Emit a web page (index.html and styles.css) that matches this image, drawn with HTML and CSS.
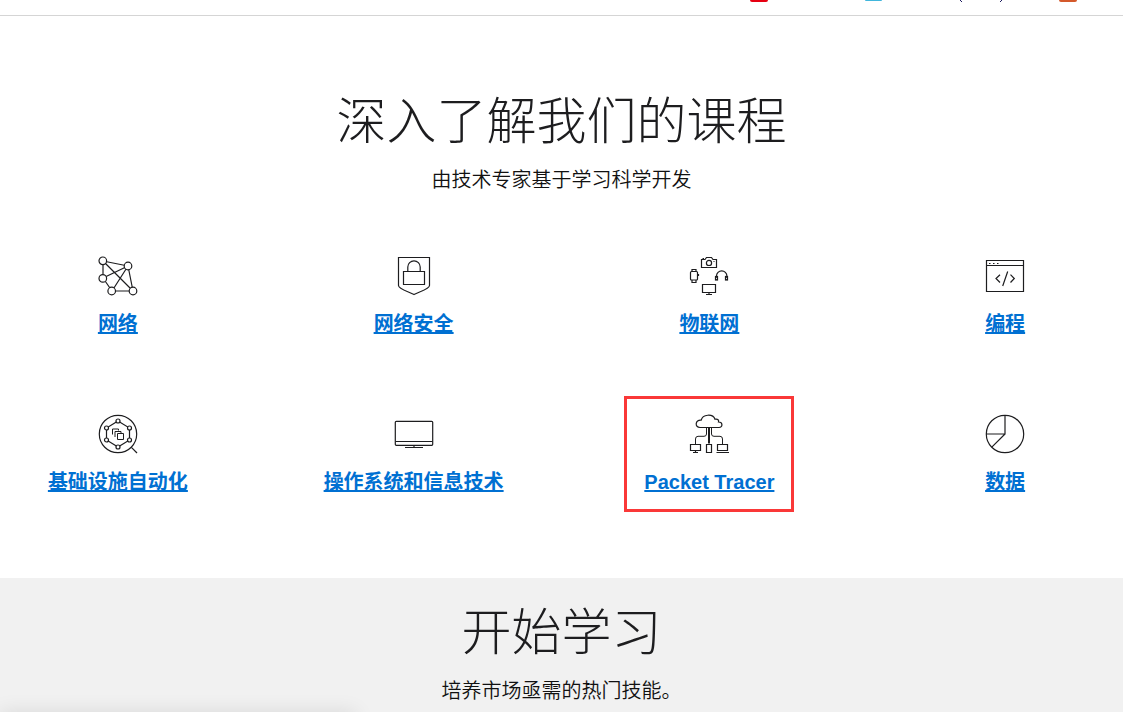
FILE: index.html
```html
<!DOCTYPE html>
<html lang="zh-CN">

<head>
  <meta charset="UTF-8" />
  <meta name="viewport" content="width=device-width, initial-scale=1" />
  <title>深入了解我们的课程</title>
  <link rel="stylesheet" href="styles.css">
</head>

<body>
  <!-- Bottom edge of the bookmarks bar -->
  <header class="topbar">
    <span class="mark mark-red"></span>
    <span class="mark mark-blue"></span>
    <svg class="mark-brackets" viewBox="0 0 44 3" aria-hidden="true">
      <path d="M1 0l2 2M43 0l-2 2" fill="none" stroke="#1a1a5e" />
    </svg>
    <span class="mark mark-orange"></span>
  </header>

  <main>
    <section class="courses">
      <h2 class="title">深入了解我们的课程</h2>
      <p class="subtitle">由技术专家基于学习科学开发</p>

      <ul class="course-grid">
        <li>
          <a class="course" href="#">
            <svg class="icon" viewBox="0 0 40 40" aria-hidden="true">
              <path d="M5 5L30 10M5 5V22M5 5L35 35M30 10L5 22M30 10L14 35M30 10L35 35M5 22L14 35H35" />
              <g class="fill-white">
                <circle cx="4.8" cy="4.8" r="3.8" />
                <circle cx="30" cy="10" r="3.8" />
                <circle cx="4.8" cy="22.4" r="3.8" />
                <circle cx="13.7" cy="35" r="3.8" />
                <circle cx="35" cy="35" r="3.8" />
              </g>
            </svg>
            <span>网络</span>
          </a>
        </li>
        <li>
          <a class="course" href="#">
            <svg class="icon" viewBox="0 0 40 40" aria-hidden="true">
              <path d="M4.5 1.5H35.5V29.5C35.5 33 26 35.5 20 38.5C14 35.5 4.5 33 4.5 29.5Z" />
              <path d="M9.5 15.5H30.5V28.5H9.5ZM13.8 15.5V11a6.2 6.2 0 0 1 12.4 0V15.5" />
            </svg>
            <span>网络安全</span>
          </a>
        </li>
        <li>
          <a class="course" href="#">
            <svg class="icon" viewBox="0 0 40 40" aria-hidden="true">
              <path d="M12.5 3.5H16L17.5 1.5H22.5L24 3.5H27.5V11.5H12.5Z" />
              <circle cx="20" cy="6.9" r="2.6" />
              <path d="M24.5 5.5H25.5M13.5 2.5H15" />
              <rect x="1.5" y="15.5" width="7" height="8.5" rx="1" />
              <path d="M3 15.5V13.5H7V15.5M3 24V26.5H7V24M9.5 18V20" />
              <path d="M27.5 20.5V20a5.2 5.2 0 0 1 10.4 0V20.5" />
              <rect x="26.5" y="20.5" width="2" height="3.5" />
              <rect x="36.5" y="20.5" width="2" height="3.5" />
              <path d="M13.5 28.5H26.5V36.5H13.5ZM20 36.5V38.5M17 38.5H23" />
            </svg>
            <span>物联网</span>
          </a>
        </li>
        <li>
          <a class="course" href="#">
            <svg class="icon" viewBox="0 0 40 40" aria-hidden="true">
              <path d="M1.5 4.5H38.5V35.5H1.5ZM1.5 9.5H38.5" />
              <path d="M4 7.5H5.5M8 7.5H9.5M12 7.5H13.5" />
              <path d="M15 18.7L11 22.5L15 26.5M25.5 18.7L29.3 22.5L25.5 26.5M22.7 15.5L17.7 30" />
            </svg>
            <span>编程</span>
          </a>
        </li>
        <li>
          <a class="course" href="#">
            <svg class="icon" viewBox="0 0 40 40" aria-hidden="true">
              <circle cx="20" cy="20" r="18.7" />
              <path d="M33.4 33.4L39 39" />
              <path d="M20 7L31.5 14V26L20 33L8.5 26V14Z" />
              <g class="fill-white">
                <circle cx="20" cy="7" r="2" />
                <circle cx="31.5" cy="14" r="2" />
                <circle cx="31.5" cy="26" r="2" />
                <circle cx="20" cy="33" r="2" />
                <circle cx="8.5" cy="26" r="2" />
                <circle cx="8.5" cy="14" r="2" />
              </g>
              <path d="M14.5 20.5V15H20.5V16.5M17 23V17.5H23V19M19.5 19.5H25.5V25.5H19.5Z" stroke-width="1" />
            </svg>
            <span>基础设施自动化</span>
          </a>
        </li>
        <li>
          <a class="course" href="#">
            <svg class="icon" viewBox="0 0 40 40" aria-hidden="true">
              <rect x="1.3" y="7.3" width="37.4" height="24" rx="1" />
              <path d="M1.5 27.5H38.5M20 31.5V33.5M11 33.5H29" />
            </svg>
            <span>操作系统和信息技术</span>
          </a>
        </li>
        <li>
          <a class="course highlighted" href="#">
            <svg class="icon" viewBox="0 0 40 40" aria-hidden="true">
              <path d="M11 13.5C5.5 13.5 6 5.5 12.2 6.2C13.5 0 24 -.5 26 5.2C29 4.5 30 6.5 29.5 8C34 8 34 13.5 30 13.5Z" />
              <path class="cable" d="M19.5 13.5V29.5M20.5 13.5V29.5M17.5 13.5V20Q17.5 22.3 15 22.3H9Q6.5 22.3 6.5 25V30M22.5 13.5V20Q22.5 22.3 25 22.3H31Q33.5 22.3 33.5 25V30" />
              <path d="M1.5 30.5H11.5V36.5H1.5ZM6.5 36.5V38.5M4 38.5H9" />
              <path d="M17.5 30.5H22.5V38.5H17.5Z" />
              <path d="M28.5 30.5H38.5V36.5H28.5ZM27.5 38.5H40" />
            </svg>
            <span>Packet Tracer</span>
          </a>
        </li>
        <li>
          <a class="course" href="#">
            <svg class="icon" viewBox="0 0 40 40" aria-hidden="true">
              <circle cx="20" cy="20" r="18.7" />
              <path d="M20 1.3V20H1.3M20 20L6.8 33.2" />
            </svg>
            <span>数据</span>
          </a>
        </li>
      </ul>
    </section>

    <section class="start">
      <h2 class="title">开始学习</h2>
      <p class="subtitle">培养市场亟需的热门技能。</p>
    </section>
  </main>

  <div class="status-shadow"></div>
</body>

</html>
```
FILE: styles.css
```css
* {
  box-sizing: border-box;
}

body {
  margin: 0;
  overflow: hidden;
  font-family: "Liberation Sans", "Noto Sans CJK SC", sans-serif;
  background-color: #fff;
  color: #1d1d1f;
}

.topbar {
  height: 16px;
  padding-right: 46px;
  border-bottom: 1px solid #d5d5d5;
  display: flex;
  justify-content: flex-end;
  align-items: flex-start;
}

.mark {
  height: 2px;
  border-radius: 0 0 3px 3px;
}

.mark-red {
  width: 18px;
  margin-right: 97px;
  background-color: #e60012;
}

.mark-blue {
  width: 17px;
  height: 1px;
  margin-right: 77px;
  background-color: #41b6dc;
}

.mark-brackets {
  width: 44px;
  height: 3px;
  margin-right: 56px;
}

.mark-orange {
  width: 18px;
  background-color: #d4592b;
}

.courses {
  padding: 71px 0 66px;
}

.title {
  margin: 0 0 17px;
  font-size: 50px;
  font-weight: 300;
  line-height: 60px;
  text-align: center;
}

.subtitle {
  margin: 0;
  color: #111;
  font-size: 20px;
  font-weight: 350;
  line-height: 30px;
  text-align: center;
}

.title,
.subtitle {
  font-family: "Noto Sans CJK SC", sans-serif;
}

.course-grid {
  list-style: none;
  margin: 44px 0 0;
  padding: 0;
  display: grid;
  grid-template-columns: repeat(4, 1fr);
  gap: 42px 60px;
}

.course-grid li {
  display: flex;
  justify-content: center;
}

.course {
  height: 116px;
  padding: 15px 17px 0;
  border: 3px solid transparent;
  display: flex;
  flex-direction: column;
  align-items: center;
  gap: 13px;
  color: #0070d2;
  font-size: 20px;
  font-weight: 700;
  line-height: 30px;
  white-space: nowrap;
  text-decoration: underline;
}

.course.highlighted {
  border-color: #fa3838;
}

.icon {
  width: 40px;
  height: 40px;
  fill: none;
  stroke: #1d1d1f;
  stroke-width: 1.2;
}

.icon .cable {
  stroke-width: 1;
}

.fill-white {
  fill: #fff;
}

.start {
  min-height: 134px;
  padding: 20px 0;
  background-color: #f1f1f1;
}

/* Shadow of the link status bubble, just under the window edge */
.status-shadow {
  position: fixed;
  top: 100%;
  left: 0;
  width: 356px;
  height: 24px;
  box-shadow: 0 0 20px rgba(0, 0, 0, 0.1);
}
```
